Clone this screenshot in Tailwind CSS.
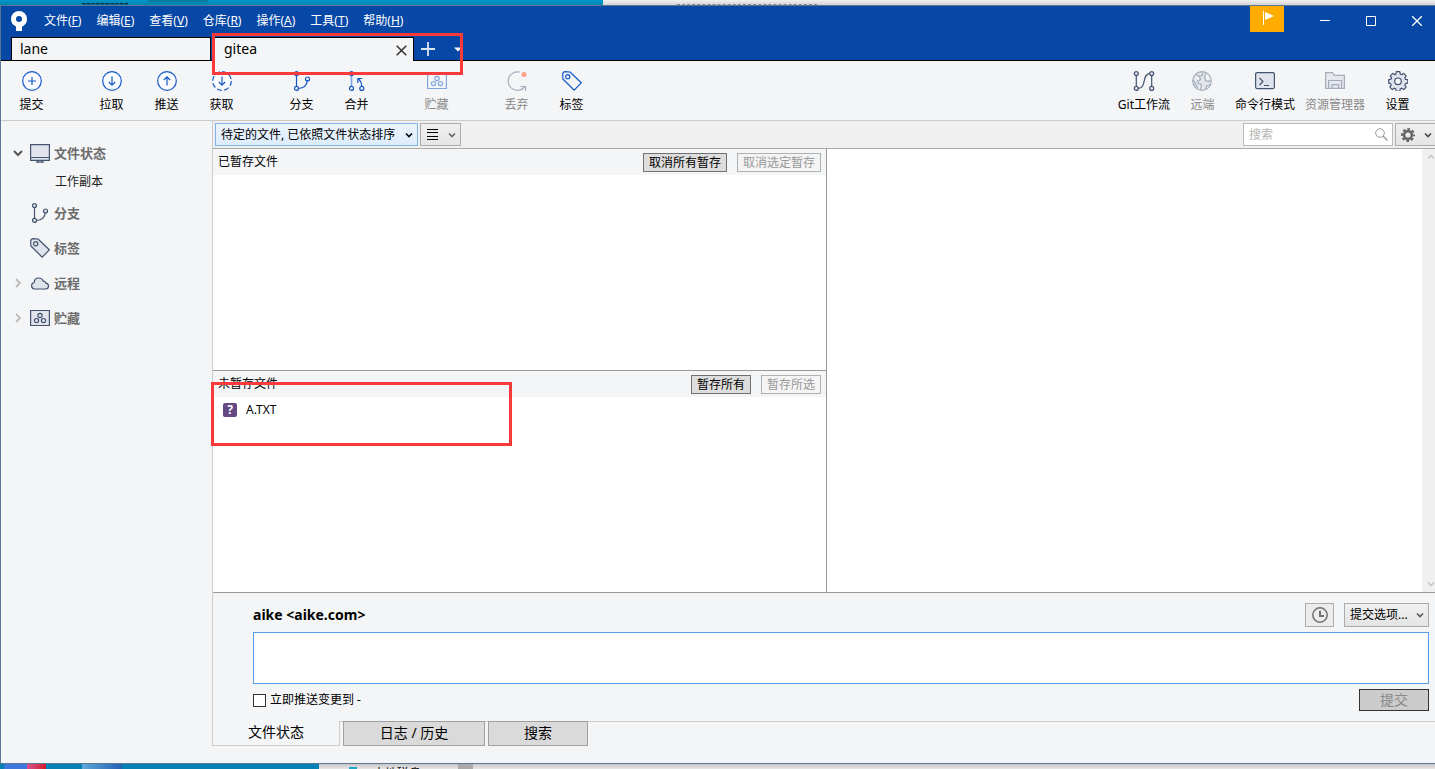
<!DOCTYPE html>
<html lang="zh-CN">
<head>
<meta charset="utf-8">
<title>Sourcetree</title>
<script src="https://cdn.jsdelivr.net/npm/@tailwindcss/browser@4"></script>
</head>
<body class="relative flex h-screen flex-col overflow-hidden bg-[#f4f5f7] font-['Noto_Sans','Noto_Sans_CJK_SC',sans-serif] text-xs leading-4 text-black">

<svg class="hidden" aria-hidden="true">
  <symbol id="branch" viewBox="0 0 20 20"><g fill="none" stroke="currentColor" stroke-width="1.2"><path d="M4.5 4.5v11M6.5 17.5c6-.2 8.500-4 9-8.500"/><g fill="var(--soft)"><circle cx="4.500" cy="2.600" r="2"/><circle cx="4.500" cy="17.400" r="2"/><circle cx="15.500" cy="8" r="2"/></g></g></symbol>
  <symbol id="tag" viewBox="0 0 20 20"><g fill="var(--soft)" stroke="currentColor" stroke-width="1.200" stroke-linejoin="round"><path d="M.7 3.200Q.7.7 3.200.7L8 1 19.300 11.800 12.200 19.200.9 8z"/><circle cx="5.700" cy="5.800" r="2.100"/></g></symbol>
  <symbol id="stash" viewBox="0 0 20 20"><g fill="var(--soft)" stroke="currentColor" stroke-width="1.200"><path d="M.6 2.500h18.800v15H.6z"/><circle cx="10" cy="7.500" r="2.100"/><circle cx="6.500" cy="12.600" r="2.100"/><circle cx="13.500" cy="12.600" r="2.100"/></g></symbol>
  <symbol id="down" viewBox="0 0 8 8"><path d="M1 2.500 4 5.500 7 2.500" fill="none" stroke="currentColor" stroke-width="1.600"/></symbol>
</svg>

<div class="flex h-[5px] shrink-0 overflow-hidden" aria-hidden="true">
  <div class="flex h-full w-[42%] items-end bg-linear-to-b from-[#0096c8] to-[#0585b0]"><span class="ml-[82px] h-[2px] w-[46px] border-t border-dashed border-[#123] bg-[#0a6f96]"></span><span class="mb-[3px] ml-5 h-[2px] w-[60px] bg-[#0a7aa3]"></span></div>
  <div class="flex h-full flex-1 items-end bg-linear-to-b from-[#f0f0f0] to-[#d4d4d4]"><span class="ml-[74px] h-px w-[140px] border-t border-dashed border-[#888]"></span></div>
</div>

<div class="flex min-h-0 flex-1 flex-col border-y border-l border-[#5a7795]">
  <header class="flex shrink-0 flex-col border-b border-black bg-[#0747a6] text-white">
    <div class="flex h-[31px] items-start">
      <svg class="mt-1 ml-2 h-6 w-5" viewBox="0 0 20 24"><path fill="#fff" fill-rule="evenodd" d="M10 1a8 8 0 0 1 8 8c0 3.500-2 6.500-5 7.500V21H7v-4.600C4 15.400 2 12.500 2 9a8 8 0 0 1 8-8zm0 5a3 3 0 1 0 0 6 3 3 0 0 0 0-6z"/></svg>
      <nav class="ml-[15px] flex gap-[15px] pt-[7px]">
        <button>文件(<u>F</u>)</button><button>编辑(<u>E</u>)</button><button>查看(<u>V</u>)</button><button>仓库(<u>R</u>)</button><button>操作(<u>A</u>)</button><button>工具(<u>T</u>)</button><button>帮助(<u>H</u>)</button>
      </nav>
      <div class="ml-auto flex">
        <button aria-label="通知" class="mr-[18px] flex h-[26px] w-[34px] justify-center bg-[#ffab00] pt-[5px]"><svg class="h-4 w-4" viewBox="0 0 16 16"><path d="M4.500 0v14" stroke="#fff" stroke-width="1"/><path d="M6 1l9 4-9 4z" fill="#fff"/></svg></button>
        <button aria-label="最小化" class="flex h-[30px] w-[46px] items-center justify-center"><svg class="h-[10px] w-[10px]" viewBox="0 0 10 10"><path d="M0 4.500h10" stroke="#fff"/></svg></button>
        <button aria-label="最大化" class="flex h-[30px] w-[46px] items-center justify-center"><svg class="h-[10px] w-[10px]" viewBox="0 0 10 10"><path d="M.5.5h9v9h-9z" stroke="#fff" fill="none"/></svg></button>
        <button aria-label="关闭" class="-mr-[5px] flex h-[30px] w-[46px] items-center justify-center"><svg class="h-[10px] w-[10px]" viewBox="0 0 10 10"><path d="M0 0l10 10M10 0L0 10" stroke="#fff" stroke-width="1.300"/></svg></button>
      </div>
    </div>
    <div class="flex h-[23px] pl-[10px] text-sm leading-5 text-black">
      <button class="w-[200px] border-x border-t border-black bg-[#f4f5f7] px-2 text-left">lane</button>
      <div class="-mb-px ml-[2px] flex w-[201px] border-x border-t border-black bg-[#f4f5f7] pr-[6px] pb-px pl-[10px]">
        <button class="flex-1 text-left">gitea</button>
        <button aria-label="关闭标签" class="flex items-center pt-[2px]"><svg class="h-[11px] w-[11px]" viewBox="0 0 11 11"><path d="M.7.7l9.600 9.600M10.300.7L.7 10.300" stroke="#333" stroke-width="1.500"/></svg></button>
      </div>
      <button aria-label="新标签" class="ml-[7px] flex items-center"><svg class="h-[14px] w-[14px]" viewBox="0 0 14 14"><path d="M7 0v14M0 7h14" stroke="#dbe4f3" stroke-width="1.800"/></svg></button>
      <button aria-label="标签列表" class="ml-[19px] flex items-center"><svg class="h-2 w-2" viewBox="0 0 8 8"><path d="M0 2.500h8l-4 4z" fill="#fff"/></svg></button>
    </div>
  </header>

  <div class="flex h-[60px] shrink-0 justify-between border-b border-[#ccc] pr-[10px] pl-[3px] [--soft:transparent]">
    <div class="flex">
      <button class="flex w-[55px] flex-col items-center gap-[6px] pt-[10px]"><svg class="h-5 w-5 text-[#1558c5]" viewBox="0 0 20 20"><g fill="none" stroke="currentColor" stroke-width="1.200"><circle cx="10" cy="10" r="9.300" fill="#fafcff"/><path d="M10 6v8M6 10h8"/></g></svg>提交</button>
      <button class="ml-[25px] flex w-[55px] flex-col items-center gap-[6px] pt-[10px]"><svg class="h-5 w-5 text-[#1558c5]" viewBox="0 0 20 20"><g fill="none" stroke="currentColor" stroke-width="1.200"><circle cx="10" cy="10" r="9.300" fill="#fafcff"/><path d="M10 5.500v8.500M6.800 11 10 14.200 13.200 11"/></g></svg>拉取</button>
      <button class="flex w-[55px] flex-col items-center gap-[6px] pt-[10px]"><svg class="h-5 w-5 text-[#1558c5]" viewBox="0 0 20 20"><g fill="none" stroke="currentColor" stroke-width="1.200"><circle cx="10" cy="10" r="9.300" fill="#fafcff"/><path d="M10 14.500V6M6.800 9 10 5.800 13.200 9"/></g></svg>推送</button>
      <button class="flex w-[55px] flex-col items-center gap-[6px] pt-[10px]"><svg class="h-5 w-5 text-[#1558c5]" viewBox="0 0 20 20"><g fill="none" stroke="currentColor" stroke-width="1.200"><circle cx="10" cy="10" r="9.300" fill="#fafcff" stroke-dasharray="5 2.300"/><path d="M10 5.500v8.500M6.800 11 10 14.200 13.200 11"/></g></svg>获取</button>
      <button class="ml-[25px] flex w-[55px] flex-col items-center gap-[6px] pt-[10px]"><svg class="h-5 w-5 text-[#1558c5]"><use href="#branch"/></svg>分支</button>
      <button class="flex w-[55px] flex-col items-center gap-[6px] pt-[10px]"><svg class="h-5 w-5 text-[#1558c5]" viewBox="0 0 20 20"><g fill="none" stroke="currentColor" stroke-width="1.200"><path d="M4.500 4.500v11" stroke="#79a3e6" stroke-width="1.600"/><circle cx="4.500" cy="2.600" r="2"/><circle cx="4.500" cy="17.400" r="2"/><circle cx="14.800" cy="17.400" r="2"/><path d="M14.800 15.300c0-3-.8-5-3-7.300M10.800 12V7.500h4.500"/></g></svg>合并</button>
      <button disabled class="ml-[25px] flex w-[55px] flex-col items-center gap-[6px] pt-[10px] text-[#8a8a8a]"><svg class="h-5 w-5 text-[#81a6df]"><use href="#stash"/></svg>贮藏</button>
      <button disabled class="ml-[25px] flex w-[55px] flex-col items-center gap-[6px] pt-[10px] text-[#8a8a8a]"><svg class="h-5 w-5" viewBox="0 0 20 20"><path d="M12.500 1.200A9.200 9.200 0 1 0 17.500 16M13.500 15.500h5v5" fill="none" stroke="#a5adba" stroke-width="1.200"/><circle cx="17" cy="3.500" r="2.600" fill="#ffa28c"/></svg>丢弃</button>
      <button class="flex w-[55px] flex-col items-center gap-[6px] pt-[10px]"><svg class="h-5 w-5 text-[#1558c5]"><use href="#tag"/></svg>标签</button>
    </div>
    <div class="flex text-[#44546f]">
      <button class="flex min-w-[55px] flex-col items-center gap-[6px] px-[5px] pt-[10px]"><svg class="h-5 w-[22px]" viewBox="0 0 22 20"><g fill="#dfe3eb" stroke="currentColor" stroke-width="1.200"><path fill="none" d="M3.300 5v10.500M18.700 5v10.500M5.500 17.400c8 0 3.500-14.800 11-14.800"/><circle cx="3.300" cy="2.600" r="2"/><circle cx="3.300" cy="17.400" r="2"/><circle cx="18.700" cy="2.600" r="2"/><circle cx="18.700" cy="17.400" r="2"/></g></svg><span class="text-black">Git工作流</span></button>
      <button disabled class="flex min-w-[55px] flex-col items-center gap-[6px] px-[5px] pt-[10px] text-[#8a8a8a]"><svg class="h-5 w-5" viewBox="0 0 20 20"><g fill="#e3e6eb" stroke="#a5adba" stroke-width="1.200"><circle cx="10" cy="10" r="9.300"/><path fill="#f0f1f4" d="M3.500 3.500 7.500 5.500 8.500 8.500 5.500 10 6.500 12.500 9.500 13.500 8.500 19M7.500 5.500 10.500 4 10 .8M1 9l2 2.500 2.500 5.500M14.500 2 12.500 5 13.500 9.500 16.500 10.500 19 8.500M13.500 18.500 14.500 15 18 14"/></g></svg>远端</button>
      <button class="flex min-w-[55px] flex-col items-center gap-[6px] px-[5px] pt-[10px]"><svg class="h-5 w-5" viewBox="0 0 20 20"><g fill="none" stroke="currentColor" stroke-width="1.200"><rect x=".6" y="1.600" width="18.800" height="16" rx="1.500" fill="#dfe3eb"/><path d="M4.500 7 8 10.500 4.500 14M9 14.500h5"/></g></svg><span class="text-black">命令行模式</span></button>
      <button disabled class="flex min-w-[55px] flex-col items-center gap-[6px] px-[5px] pt-[10px] text-[#8a8a8a]"><svg class="h-5 w-5" viewBox="0 0 20 20"><g fill="#e6e8ed" stroke="#a5adba" stroke-width="1.200"><path d="M.6 17.400V1.600h7l1.500 2.800h10.300v13z"/><path d="M3.600 17.400V9.500h13v7.900h-3v-3.800H7v3.800z"/></g></svg>资源管理器</button>
      <button class="flex min-w-[55px] flex-col items-center gap-[6px] px-[5px] pt-[10px]"><svg class="h-5 w-5" viewBox="0 0 20 20"><g fill="#dfe3eb" stroke="currentColor" stroke-width="1.200" stroke-linejoin="round"><path d="M8.200.7h3.600l.5 2.400 1.400.6 2-1.400 2.500 2.500-1.300 2 .5 1.500 2.400.4v3.400l-2.400.5-.6 1.500 1.400 2-2.500 2.500-2-1.400-1.400.6-.5 2.500H8.200l-.5-2.500-1.400-.6-2 1.400-2.500-2.500 1.400-2-.6-1.500L.7 12.100V8.700l2.300-.5.6-1.400-1.400-2 2.500-2.500 2 1.400 1.100-.6z"/><circle cx="10" cy="10.300" r="3.300" fill="#f4f5f7"/></g></svg><span class="text-black">设置</span></button>
    </div>
  </div>

  <div class="flex min-h-0 flex-1">
    <aside class="w-[211px] shrink-0 pt-[14px] text-[13px] font-bold text-[#6c6c6c] [--soft:#dfe3eb]">
      <ul>
        <li>
          <a href="#" class="flex h-[35px] items-center pl-3"><svg class="mr-[7px] h-[10px] w-[10px]" viewBox="0 0 10 10"><path d="M1 3l4 4 4-4" fill="none" stroke="#555" stroke-width="2"/></svg><svg class="mr-1 h-5 w-5 text-[#44546f]" viewBox="0 0 20 20"><path d="M.6 1.600h18.800v15.800H.6zM.6 14.500h18.800M8 17.500v1.500M12 17.500v1.500M6 19.200h8" fill="#dfe3eb" stroke="currentColor" stroke-width="1.200"/></svg>文件状态</a>
          <a href="#" class="block h-[25px] pt-1 pl-[54px] text-xs font-normal text-[#222]">工作副本</a>
        </li>
        <li><a href="#" class="flex h-[35px] items-center pl-[29px]"><svg class="mr-1 h-5 w-5 text-[#44546f]"><use href="#branch"/></svg>分支</a></li>
        <li><a href="#" class="flex h-[35px] items-center pl-[29px]"><svg class="mr-1 h-5 w-5 text-[#44546f]"><use href="#tag"/></svg>标签</a></li>
        <li><a href="#" class="flex h-[35px] items-center pl-3"><svg class="mr-[7px] h-[10px] w-[10px]" viewBox="0 0 10 10"><path d="M3 1l4 4-4 4" fill="none" stroke="#bbb" stroke-width="1.800"/></svg><svg class="mr-1 h-5 w-5 text-[#44546f]" viewBox="0 0 20 20"><path d="M4.500 16a3.300 3.300 0 0 1-.3-6.500C4.300 6.700 6.300 5 8.800 5c2 0 3.800 1.200 4.300 3.200 1.300-.2 2.500.6 2.600 2 1.700.2 2.800 1.400 2.800 2.900S17.300 16 15.500 16z" fill="#dfe3eb" stroke="currentColor" stroke-width="1.200"/></svg>远程</a></li>
        <li><a href="#" class="flex h-[35px] items-center pl-3"><svg class="mr-[7px] h-[10px] w-[10px]" viewBox="0 0 10 10"><path d="M3 1l4 4-4 4" fill="none" stroke="#bbb" stroke-width="1.800"/></svg><svg class="mr-1 h-5 w-5 text-[#44546f]"><use href="#stash"/></svg>贮藏</a></li>
      </ul>
    </aside>

    <main class="mb-[17px] flex min-w-0 flex-1 flex-col border-l border-[#ccc]">
      <div class="flex h-7 shrink-0 items-center justify-between border-b border-[#a9a9a9] bg-[#f0f0f0] pl-[2px]">
        <div class="flex gap-[2px]">
          <label class="relative flex h-[23px] w-[203px] items-center text-black">
            <select aria-label="文件排序" class="h-full w-full appearance-none border border-[#7eb4ea] bg-linear-to-b from-[#ecf4fc] to-[#dcecfc] pr-4 pl-[5px]"><option>待定的文件, 已依照文件状态排序</option></select>
            <svg class="pointer-events-none absolute right-[5px] h-2 w-2"><use href="#down"/></svg>
          </label>
          <button aria-label="视图" class="flex h-[23px] w-[41px] items-center gap-[10px] border border-[#acacac] bg-linear-to-b from-[#f0f0f0] to-[#e5e5e5] pl-[6px] text-[#666]"><svg class="h-[11px] w-[11px]" viewBox="0 0 11 11"><path d="M0 .5h11M0 3.500h11M0 7.500h11M0 10.500h11" stroke="#000"/></svg><svg class="h-2 w-2"><use href="#down"/></svg></button>
        </div>
        <div class="flex gap-[2px]">
          <label class="flex h-[23px] w-[150px] items-center border border-[#bbb] bg-white pr-1 pl-[5px]">
            <input type="text" aria-label="搜索" placeholder="搜索" class="w-full min-w-0 outline-none placeholder:text-[#b5b5b5]">
            <svg class="h-[13px] w-[13px] shrink-0" viewBox="0 0 13 13"><g fill="none" stroke="#999"><circle cx="5" cy="5" r="4.300"/><path d="M8 8l4.500 4.500" stroke-width="1.400"/></g></svg>
          </label>
          <button aria-label="选项" class="flex h-[23px] w-10 items-center justify-between border-y border-l border-[#acacac] bg-linear-to-b from-[#f0f0f0] to-[#e5e5e5] pr-[3px] pl-[5px] text-[#444]"><svg class="h-[14px] w-[14px]" viewBox="0 0 14 14"><circle cx="7" cy="7" r="6" fill="none" stroke="#666" stroke-width="2" stroke-dasharray="2.700 2.012" stroke-dashoffset="1.350"/><circle cx="7" cy="7" r="3.900" fill="none" stroke="#666" stroke-width="2.600"/></svg><svg class="h-2 w-2"><use href="#down"/></svg></button>
        </div>
      </div>

      <div class="flex min-h-0 flex-1 bg-white">
        <div class="flex w-[614px] shrink-0 flex-col border-r border-[#999]">
          <section class="min-h-0 flex-1 border-b border-[#999]">
            <div class="flex h-[26px] items-start justify-between bg-[#f4f5f7] pt-1 pr-[5px] pl-[5px]">
              <h2 class="leading-[18px]">已暂存文件</h2>
              <div class="flex gap-[10px]"><button class="h-[19px] border border-[#707070] bg-[#ddd] px-[5px]">取消所有暂存</button><button disabled class="h-[19px] border border-[#adb2b5] bg-[#f4f4f4] px-[5px] text-[#999]">取消选定暂存</button></div>
            </div>
          </section>
          <section class="min-h-0 flex-1">
            <div class="flex h-[26px] items-start justify-between bg-[#f4f5f7] pt-1 pr-[5px] pl-[5px]">
              <h2 class="leading-[18px]">未暂存文件</h2>
              <div class="flex gap-[10px]"><button class="h-[19px] border border-[#707070] bg-[#ddd] px-[5px]">暂存所有</button><button disabled class="h-[19px] border border-[#adb2b5] bg-[#f4f4f4] px-[5px] text-[#999]">暂存所选</button></div>
            </div>
            <ul><li class="flex h-[26px] items-center gap-[9px] pl-[10px] leading-[18px]"><span class="flex h-[14px] w-[14px] items-center justify-center rounded-xs bg-[#654982] font-bold text-white">?</span>A.TXT</li></ul>
          </section>
        </div>
        <div class="flex-1"></div>
        <div class="flex w-[13px] flex-col items-end justify-between bg-[#f0f0f0] py-1 text-[#c6c6c6]" aria-hidden="true"><svg class="h-2 w-2 rotate-180"><use href="#down"/></svg><svg class="h-2 w-2"><use href="#down"/></svg></div>
      </div>

      <form class="shrink-0 border-t border-[#999] pt-[10px] pr-[6px] pb-[10px] pl-10">
        <div class="flex h-6 items-center gap-[10px]">
          <strong class="mr-auto text-sm leading-[22px] whitespace-pre">aike &lt;aike.com&gt;</strong>
          <button type="button" aria-label="历史消息" class="flex h-6 w-[29px] items-center justify-center border border-[#acacac] bg-[#ececec]"><svg class="h-4 w-4" viewBox="0 0 16 16"><g fill="none" stroke="#707070" stroke-width="1.500"><circle cx="8" cy="8" r="7.200"/><path d="M8 3.800V9h4" stroke-width="2"/></g></svg></button>
          <label class="relative flex h-6 w-[85px] items-center"><select aria-label="提交选项" class="h-full w-full appearance-none border border-[#acacac] bg-linear-to-b from-[#f0f0f0] to-[#e5e5e5] pl-[5px]"><option>提交选项...</option></select><svg class="pointer-events-none absolute right-[5px] h-2 w-2 text-[#555]"><use href="#down"/></svg></label>
        </div>
        <textarea aria-label="提交消息" class="mt-[5px] block h-[52px] w-full resize-none border border-[#569de5] bg-white px-1 outline-none"></textarea>
        <div class="mt-[5px] flex h-[22px] items-center justify-between">
          <label class="flex items-center gap-1"><input type="checkbox" class="h-[13px] w-[13px] appearance-none border border-[#333] bg-white">立即推送变更到 -</label>
          <button disabled class="h-[22px] w-[70px] border border-[#333] bg-[#ccc] text-sm leading-5 text-[#888]">提交</button>
        </div>
      </form>

      <div class="flex h-[25px] shrink-0 text-sm leading-5">
        <button class="w-[127px] border-r border-b border-[#ccc] pb-[2px]">文件状态</button>
        <div class="flex flex-1 gap-[3px] border-t border-[#ccc] pl-[3px]">
          <button class="-mt-px w-[142px] border border-[#a0a0a0] bg-[#dadada] pb-[2px]">日志 / 历史</button>
          <button class="-mt-px w-[100px] border border-[#a0a0a0] bg-[#dadada] pb-[2px]">搜索</button>
        </div>
      </div>
    </main>
  </div>
</div>

<div class="flex h-[5px] shrink-0 overflow-hidden" aria-hidden="true">
  <div class="flex w-[319px] bg-[#0480b4]"><span class="ml-1 w-[23px] bg-[#3d78dd]"></span><span class="w-[19px] bg-linear-to-r from-[#d8508a] to-[#d01028]"></span><span class="ml-9 w-10 bg-linear-to-r from-[#5fa8d8] to-[#2560b4]"></span></div>
  <div class="flex flex-1 bg-linear-to-b from-[#c8c8c8] to-[#e6e6e6]"><span class="mt-[3px] ml-[30px] h-[2px] w-2 bg-[#1fa8c8]"></span><span class="ml-4 leading-5">本地磁盘 (C:)</span><span class="ml-4 w-[15px] bg-[#aaa]"></span></div>
</div>

<div class="pointer-events-none absolute top-[33px] left-[212px] h-[42px] w-[251px] border-3 border-[#fa3a3a]" aria-hidden="true"></div>
<div class="pointer-events-none absolute top-[382px] left-[211px] h-16 w-[301px] border-3 border-[#fa3a3a]" aria-hidden="true"></div>
</body>
</html>
